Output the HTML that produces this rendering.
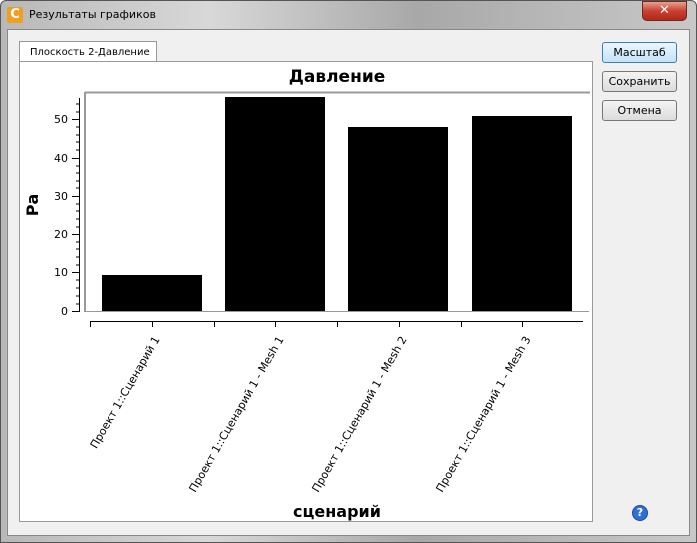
<!DOCTYPE html>
<html><head><meta charset="utf-8"><style>
body{margin:0;width:697px;height:543px;overflow:hidden;font-family:"DejaVu Sans","Liberation Sans",sans-serif;background:#fff}
.win{position:absolute;left:0;top:0;width:695px;height:541px;border:1px solid #555;border-radius:6px 6px 0 0;background:linear-gradient(90deg,#b8b8b8,#d8d8d8 30%,#a8a8a8 60%,#c8c8c8);}
.title{position:absolute;left:29px;top:8px;font-size:11px;color:#000}
.ico{position:absolute;left:7px;top:7px;width:16px;height:16px;background:#f0a020;border-radius:2px;color:#fff;font-weight:bold;font-size:13px;line-height:16px;text-align:center}
.close{position:absolute;left:642px;top:1px;width:43px;height:18px;border:1px solid #6b2a20;border-radius:0 0 5px 5px;background:linear-gradient(#e8a090,#c84030 50%,#b02818);color:#fff;font-weight:bold;font-size:13px;text-align:center;line-height:18px}
.client{position:absolute;left:7px;top:29px;width:681px;height:505px;background:#f0f0f0;border:1px solid #888}
.tab{position:absolute;left:19px;top:41px;width:138px;height:20px;background:#fff;border:1px solid #999;border-bottom:none;font-size:10px;line-height:21px;padding-left:10px;box-sizing:border-box}
.panel{position:absolute;left:19px;top:61px;width:574px;height:461px;background:#fff;border:1px solid #999;box-sizing:border-box}
.btn{position:absolute;left:602px;width:75px;height:21px;border:1px solid #777;border-radius:3px;background:linear-gradient(#f4f4f4,#dcdcdc);font-size:11px;text-align:center;line-height:20px;box-sizing:border-box}
.help{position:absolute;left:632px;top:505px;width:14px;height:14px;border-radius:50%;background:#2f6fd8;border:1px solid #1a4aa0;color:#fff;font-size:11px;font-weight:bold;text-align:center;line-height:14px}
</style></head><body>
<div class="win"></div>
<div class="ico">C</div>
<div class="title">Результаты графиков</div>
<div class="close">✕</div>
<div class="client"></div>
<div class="tab">Плоскость 2-Давление</div>
<div class="panel"></div>
<div class="btn" style="top:42px;border-color:#3c7fb1;background:linear-gradient(#eaf6fd,#c4e3f7)">Масштаб</div>
<div class="btn" style="top:71px">Сохранить</div>
<div class="btn" style="top:100px">Отмена</div>
<div class="help">?</div>
<svg style="position:absolute;left:0;top:0" width="697" height="543">
<text x="337" y="82" font-size="17" font-weight="bold" text-anchor="middle" font-family="DejaVu Sans">Давление</text>
<line x1="85" y1="92.5" x2="590" y2="92.5" stroke="#999" stroke-width="2"/>
<line x1="85" y1="92" x2="85" y2="312" stroke="#999" stroke-width="2"/>
<line x1="85" y1="311.5" x2="589" y2="311.5" stroke="#999" stroke-width="1"/>
<g stroke="#000" stroke-width="1">
<line x1="79.5" y1="98" x2="79.5" y2="312"/>
<line x1="72" y1="311.5" x2="80" y2="311.5"/><line x1="72" y1="272.5" x2="80" y2="272.5"/><line x1="72" y1="234.5" x2="80" y2="234.5"/><line x1="72" y1="196.5" x2="80" y2="196.5"/><line x1="72" y1="158.5" x2="80" y2="158.5"/><line x1="72" y1="119.5" x2="80" y2="119.5"/>
<line x1="76" y1="304" x2="80" y2="304"/><line x1="76" y1="296" x2="80" y2="296"/><line x1="76" y1="288" x2="80" y2="288"/><line x1="76" y1="280" x2="80" y2="280"/>
<line x1="76" y1="265" x2="80" y2="265"/><line x1="76" y1="257" x2="80" y2="257"/><line x1="76" y1="249" x2="80" y2="249"/><line x1="76" y1="242" x2="80" y2="242"/>
<line x1="76" y1="227" x2="80" y2="227"/><line x1="76" y1="219" x2="80" y2="219"/><line x1="76" y1="211" x2="80" y2="211"/><line x1="76" y1="204" x2="80" y2="204"/>
<line x1="76" y1="188" x2="80" y2="188"/><line x1="76" y1="181" x2="80" y2="181"/><line x1="76" y1="173" x2="80" y2="173"/><line x1="76" y1="166" x2="80" y2="166"/>
<line x1="76" y1="150" x2="80" y2="150"/><line x1="76" y1="142" x2="80" y2="142"/><line x1="76" y1="135" x2="80" y2="135"/><line x1="76" y1="127" x2="80" y2="127"/>
<line x1="76" y1="112" x2="80" y2="112"/><line x1="76" y1="104" x2="80" y2="104"/>
<line x1="90" y1="321.5" x2="583" y2="321.5"/>
<line x1="90.5" y1="321" x2="90.5" y2="327"/><line x1="152.5" y1="321" x2="152.5" y2="327"/><line x1="214.5" y1="321" x2="214.5" y2="327"/><line x1="275.5" y1="321" x2="275.5" y2="327"/><line x1="337.5" y1="321" x2="337.5" y2="327"/><line x1="399.5" y1="321" x2="399.5" y2="327"/><line x1="461.5" y1="321" x2="461.5" y2="327"/><line x1="522.5" y1="321" x2="522.5" y2="327"/>
</g>
<g font-size="11" text-anchor="end" font-family="DejaVu Sans" fill="#000">
<text x="68" y="315">0</text><text x="68" y="276">10</text><text x="68" y="238">20</text><text x="68" y="200">30</text><text x="68" y="162">40</text><text x="68" y="123">50</text>
</g>
<rect x="102" y="275" width="100" height="36" fill="#000"/>
<rect x="225" y="97" width="100" height="214" fill="#000"/>
<rect x="348" y="127" width="100" height="184" fill="#000"/>
<rect x="472" y="116" width="100" height="195" fill="#000"/>
<g font-size="11" text-anchor="end" font-family="DejaVu Sans" fill="#000">
<text transform="translate(160,339) rotate(-60)">Проект 1::Сценарий 1</text>
<text transform="translate(284,339) rotate(-60)">Проект 1::Сценарий 1 - Mesh 1</text>
<text transform="translate(407,339) rotate(-60)">Проект 1::Сценарий 1 - Mesh 2</text>
<text transform="translate(531,339) rotate(-60)">Проект 1::Сценарий 1 - Mesh 3</text>
</g>
<text x="337" y="517" font-size="16" font-weight="bold" text-anchor="middle" font-family="DejaVu Sans">сценарий</text>
<text transform="translate(38,205) rotate(-90)" font-size="16" font-weight="bold" text-anchor="middle" font-family="DejaVu Sans">Ра</text>
</svg>
</body></html>
